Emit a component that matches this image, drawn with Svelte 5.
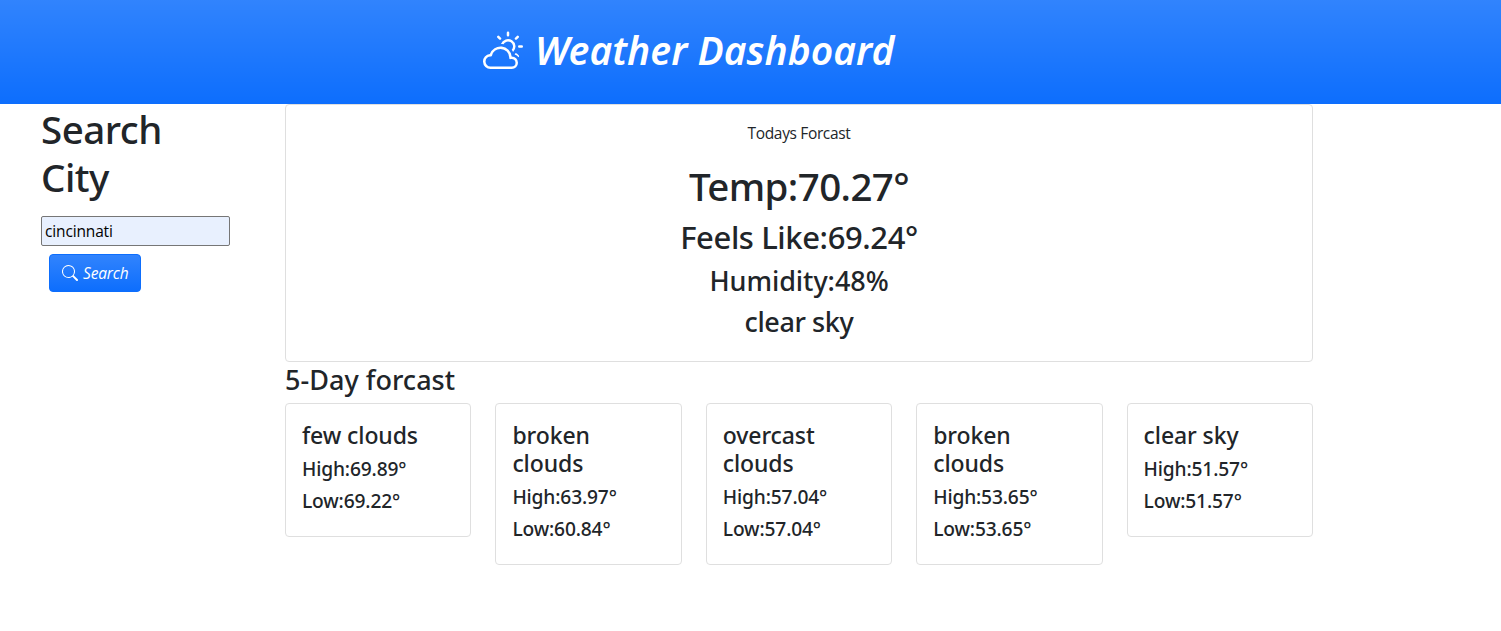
<script>
  const days = [
    { sky: 'few clouds', high: '69.89', low: '69.22' },
    { sky: 'broken clouds', high: '63.97', low: '60.84' },
    { sky: 'overcast clouds', high: '57.04', low: '57.04' },
    { sky: 'broken clouds', high: '53.65', low: '53.65' },
    { sky: 'clear sky', high: '51.57', low: '51.57' }
  ];
  let city = $state('cincinnati');
</script>

<header>
  <svg class="cloud" viewBox="0 0 16 16" fill="currentColor" aria-hidden="true">
    <path d="M7 8a3.5 3.5 0 0 1 3.5 3.555.5.5 0 0 0 .624.492A1.503 1.503 0 0 1 13 13.5a1.5 1.5 0 0 1-1.5 1.5H3a2 2 0 1 1 .1-3.998.5.5 0 0 0 .51-.375A3.502 3.502 0 0 1 7 8zm4.473 3a4.5 4.5 0 0 0-8.72-.99A3 3 0 0 0 3 16h8.5a2.5 2.5 0 0 0 0-5h-.027z" />
    <path d="M10.5 1.5a.5.5 0 0 0-1 0v1a.5.5 0 0 0 1 0v-1zm3.743 1.964a.5.5 0 1 0-.707-.707l-.708.707a.5.5 0 0 0 .708.708l.707-.708zm-7.779-.707a.5.5 0 0 0-.707.707l.707.708a.5.5 0 1 0 .708-.708l-.708-.707zm1.734 3.374a2 2 0 1 1 3.296 2.198c.199.281.372.582.516.898a3 3 0 1 0-4.84-3.225c.352.011.696.055 1.028.129zm4.484 4.074c.6.215 1.125.59 1.522 1.072a.5.5 0 0 0 .039-.742l-.707-.707a.5.5 0 0 0-.854.377zM14.5 6.5a.5.5 0 0 0 0 1h1a.5.5 0 0 0 0-1h-1z" />
  </svg>
  <h1>Weather Dashboard</h1>
</header>

<main>
  <aside>
    <h2 class="find">Search City</h2>
    <input type="text" bind:value={city} aria-label="City" />
    <button type="button">
      <svg viewBox="0 0 16 16" fill="currentColor" aria-hidden="true">
        <path d="M11.742 10.344a6.5 6.5 0 1 0-1.397 1.398h-.001c.03.04.062.078.098.115l3.85 3.85a1 1 0 0 0 1.415-1.414l-3.85-3.85a1.007 1.007 0 0 0-.115-.1zM12 6.5a5.5 5.5 0 1 1-11 0 5.5 5.5 0 0 1 11 0z" />
      </svg>
      <i>Search</i>
    </button>
  </aside>

  <div class="forecast">
    <section class="card today">
      <p>Todays Forcast</p>
      <div class="temp">Temp:70.27°</div>
      <div class="feels">Feels Like:69.24°</div>
      <div class="humidity">Humidity:48%</div>
      <div class="sky">clear sky</div>
    </section>
    <h3 class="heading">5-Day forcast</h3>
    <div class="days">
      {#each days as day}
        <section class="card day">
          <h4>{day.sky}</h4>
          <h5>High:{day.high}°</h5>
          <h5>Low:{day.low}°</h5>
        </section>
      {/each}
    </div>
  </div>
</main>

<style>
  :global(body) {
    margin: 0;
    background: #fff;
    color: #212529;
    font: 400 15.5px/24px 'Open Sans', 'Noto Sans', sans-serif;
  }
  * { box-sizing: border-box; }
  h1, h2, h3, h4, h5, p { margin: 0; }
  h1, h2, h3, h4, h5, .temp, .feels, .humidity, .sky {
    font-family: 'Noto Sans', 'Open Sans', sans-serif;
    font-weight: 500;
    padding-top: 1px;
    margin-bottom: 7px;
    white-space: nowrap;
  }
  header {
    display: flex;
    align-items: flex-start;
    height: 104px;
    padding: 24px 0 0 483px;
    color: #fff;
    background: #0d6efd linear-gradient(180deg, rgba(255, 255, 255, 0.15), rgba(255, 255, 255, 0));
  }
  .cloud { width: 40px; height: 40px; margin: 5px 12px 0 0; flex: none; }
  h1 { font-size: 39px; line-height: 52px; font-style: italic; font-weight: 600; letter-spacing: 0.03px; padding-top: 0; }
  main { display: flex; }
  aside {
    width: 285px;
    padding-left: 41px;
    display: flex;
    flex-direction: column;
    align-items: flex-start;
    flex: none;
  }
  .find { font-size: 38.5px; line-height: 48px; width: 150px; white-space: normal; letter-spacing: -0.5px; margin-bottom: 15px; }
  input {
    width: 189px;
    height: 30px;
    padding: 1px 3px;
    border: 1px solid #767676;
    border-radius: 2px;
    background: #e8f0fe;
    color: #000;
    font: inherit;
    letter-spacing: -0.15px;
    outline: none;
  }
  button {
    display: flex;
    align-items: center;
    width: 92px;
    height: 38px;
    margin: 8px 0 0 8px;
    padding: 0 0 0 12px;
    border: 1px solid #0d6efd;
    border-radius: 4px;
    color: #fff;
    background: #0d6efd linear-gradient(180deg, rgba(255, 255, 255, 0.15), rgba(255, 255, 255, 0));
    font: inherit;
    letter-spacing: -0.15px;
  }
  button svg { width: 16px; height: 16px; margin-right: 5px; flex: none; }
  .forecast { width: 1028px; }
  .card { border: 1px solid #dfdfdf; border-radius: 4px; padding: 16px; }
  .today { text-align: center; height: 258px; }
  .today p { margin-bottom: 16px; letter-spacing: -0.35px; }
  .temp { font-size: 38.5px; line-height: 48px; letter-spacing: -0.6px; }
  .feels { font-size: 31px; line-height: 38px; letter-spacing: -0.4px; }
  .humidity, .sky, .heading { font-size: 27px; line-height: 33px; letter-spacing: -0.05px; }
  .sky { letter-spacing: -0.4px; }
  .heading { letter-spacing: 0.03px; }
  .days { display: grid; grid-template-columns: repeat(5, 1fr); gap: 24px; align-items: start; }
  h4 { font-size: 23px; line-height: 28px; white-space: normal; letter-spacing: -0.1px; }
  h5 { font-size: 19.2px; line-height: 24px; letter-spacing: -0.15px; }
</style>
